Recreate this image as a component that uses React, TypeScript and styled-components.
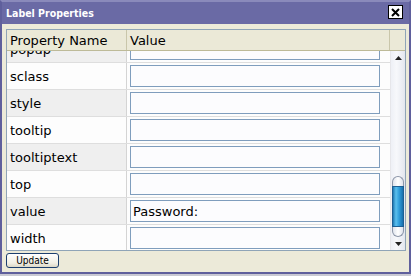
import React from 'react';
import styled, {createGlobalStyle} from 'styled-components';

const GlobalStyle = createGlobalStyle`
  html, body {
    margin: 0;
    padding: 0;
    background: #c9c9d3;
  }
  * {
    box-sizing: border-box;
  }
`;

const ROW_HEIGHT = 27;
const SCROLL_OFFSET = 15;

const Window = styled.div`
  width: 411px;
  height: 274px;
  display: flex;
  flex-direction: column;
  background-color: #ecead9;
  border: 2px solid #5f5f9c;
  border-top-color: #8a8abb;
  font-family: "DejaVu Sans", Verdana, sans-serif;
  overflow: hidden;
`;

const TitleBar = styled.div`
  height: 22px;
  flex-shrink: 0;
  display: flex;
  align-items: center;
  justify-content: space-between;
  padding: 0 6px 0 4px;
  background-color: #6a6aa5;
`;

const Title = styled.span`
  color: #ffffff;
  font-family: "DejaVu Sans Condensed", "DejaVu Sans", sans-serif;
  font-weight: bold;
  font-size: 10.5px;
`;

const CloseButton = styled.div`
  width: 15px;
  height: 14px;
  display: flex;
  align-items: center;
  justify-content: center;
  background-color: #ffffff;
  border: 1px solid #000000;
  margin-top: -2px;
`;

const Body = styled.div`
  flex: 1;
  display: flex;
  flex-direction: column;
  padding: 5px 3px 0 4px;
`;

const Grid = styled.div`
  height: 222px;
  display: flex;
  flex-direction: column;
  border: 1px solid #8fa4b7;
  background-color: #ffffff;
`;

const HeaderRow = styled.div`
  height: 21px;
  flex-shrink: 0;
  display: flex;
  position: relative;
  z-index: 1;
  background-color: #ebe9d7;
  border-bottom: 1px solid #bdba98;
`;

interface CellProps {
  readonly width?: number;
}

const HeaderCell = styled.div<CellProps>`
  ${props => props.width ? `width: ${props.width}px;` : 'flex: 1;'}
  flex-shrink: 0;
  display: flex;
  align-items: center;
  padding-left: 3px;
  font-size: 13px;
  color: #000000;
  border-right: 1px solid #c9c6aa;
  &:last-child {
    border-right: none;
  }
`;

const Content = styled.div`
  flex: 1;
  display: flex;
  min-height: 0;
`;

const Viewport = styled.div`
  flex: 1;
  overflow: hidden;
`;

const RowList = styled.div`
  display: flex;
  flex-direction: column;
`;

interface RowProps {
  readonly alt: boolean;
}

const Row = styled.div<RowProps>`
  height: ${ROW_HEIGHT}px;
  flex-shrink: 0;
  display: flex;
  border-bottom: 1px solid #dedede;
  background-color: ${props => props.alt ? '#efefef' : '#fdfdfd'};
`;

const NameCell = styled.div`
  width: 120px;
  flex-shrink: 0;
  display: flex;
  align-items: center;
  padding-left: 3px;
  font-size: 13px;
  color: #000000;
  border-right: 1px solid #d4d4d4;
`;

const ValueCell = styled.div`
  flex: 1;
  display: flex;
  align-items: center;
  padding-left: 3px;
  background-color: #fdfdfd;
`;

const TextInput = styled.div`
  width: 250px;
  height: 22px;
  display: flex;
  align-items: center;
  padding-left: 2px;
  border: 1px solid #7f9dbd;
  background-color: #fcfcfe;
  font-size: 13px;
  color: #000000;
`;

const ScrollBar = styled.div`
  width: 15px;
  flex-shrink: 0;
  display: flex;
  flex-direction: column;
  background: linear-gradient(to right, #eef0f6, #f7f8fb 40%, #e3e6ee);
  border-left: 1px solid #e6e6ea;
`;

const ArrowButton = styled.div<{ h: number }>`
  height: ${props => props.h}px;
  flex-shrink: 0;
  display: flex;
  align-items: center;
  justify-content: center;
`;

const Track = styled.div`
  flex: 1;
  display: flex;
  flex-direction: column;
`;

interface ThumbProps {
  readonly offset: number;
}

const Thumb = styled.div<ThumbProps>`
  margin-top: ${props => props.offset}px;
  margin-left: 1px;
  width: 12px;
  height: 61px;
  display: flex;
  flex-direction: column;
`;

const ThumbCap = styled.div<{ top?: boolean }>`
  height: 10px;
  background: linear-gradient(to right, #dfe3ec, #ffffff 50%, #dfe3ec);
  border: 1px solid #8c96a8;
  ${props => props.top
    ? 'border-bottom: none; border-radius: 6px 6px 0 0;'
    : 'border-top: none; border-radius: 0 0 6px 6px;'}
`;

const ThumbBody = styled.div`
  flex: 1;
  background: linear-gradient(to right, #1f78b4, #5bc0ee 30%, #2f9edc 60%, #1a6fab);
  border: 1px solid #1d5f93;
`;

const Footer = styled.div`
  height: 21px;
  display: flex;
  align-items: flex-start;
  padding-top: 2px;
`;

const Button = styled.button`
  width: 53px;
  height: 15px;
  padding: 0;
  display: flex;
  align-items: center;
  justify-content: center;
  border: 1px solid #1c3f6e;
  border-radius: 3px;
  background: linear-gradient(#ffffff, #f1efe4 70%, #dcd8c6);
  font-family: "DejaVu Sans Condensed", "DejaVu Sans", sans-serif;
  font-size: 10px;
  color: #000000;
`;

const properties = [
  {name: 'popup', value: ''},
  {name: 'sclass', value: ''},
  {name: 'style', value: ''},
  {name: 'tooltip', value: ''},
  {name: 'tooltiptext', value: ''},
  {name: 'top', value: ''},
  {name: 'value', value: 'Password:'},
  {name: 'width', value: ''},
];

const CloseIcon = () => (
  <svg width="9" height="9" viewBox="0 0 9 9">
    <path d="M1 1 L8 8 M8 1 L1 8" stroke="#000" strokeWidth="2" />
  </svg>
);

const ArrowIcon = ({down}: {down?: boolean}) => (
  <svg width="7" height="4" viewBox="0 0 7 4">
    <path d={down ? 'M0 0 H7 L3.5 4 Z' : 'M0 4 H7 L3.5 0 Z'} fill="#222" />
  </svg>
);

const App: React.FC = () => {
  return (
    <>
      <GlobalStyle />
      <Window>
        <TitleBar>
          <Title>Label Properties</Title>
          <CloseButton>
            <CloseIcon />
          </CloseButton>
        </TitleBar>
        <Body>
          <Grid>
            <HeaderRow>
              <HeaderCell width={120}>Property Name</HeaderCell>
              <HeaderCell>Value</HeaderCell>
              <HeaderCell width={15} />
            </HeaderRow>
            <Content>
              <Viewport>
                <RowList style={{marginTop: -SCROLL_OFFSET}}>
                  {properties.map((p, i) => (
                    <Row key={p.name} alt={i % 2 === 0}>
                      <NameCell>{p.name}</NameCell>
                      <ValueCell>
                        <TextInput>{p.value}</TextInput>
                      </ValueCell>
                    </Row>
                  ))}
                </RowList>
              </Viewport>
              <ScrollBar>
                <ArrowButton h={14}>
                  <ArrowIcon />
                </ArrowButton>
                <Track>
                  <Thumb offset={111}>
                    <ThumbCap top />
                    <ThumbBody />
                    <ThumbCap />
                  </Thumb>
                </Track>
                <ArrowButton h={13}>
                  <ArrowIcon down />
                </ArrowButton>
              </ScrollBar>
            </Content>
          </Grid>
          <Footer>
            <Button>Update</Button>
          </Footer>
        </Body>
      </Window>
    </>
  );
};

export default App;
